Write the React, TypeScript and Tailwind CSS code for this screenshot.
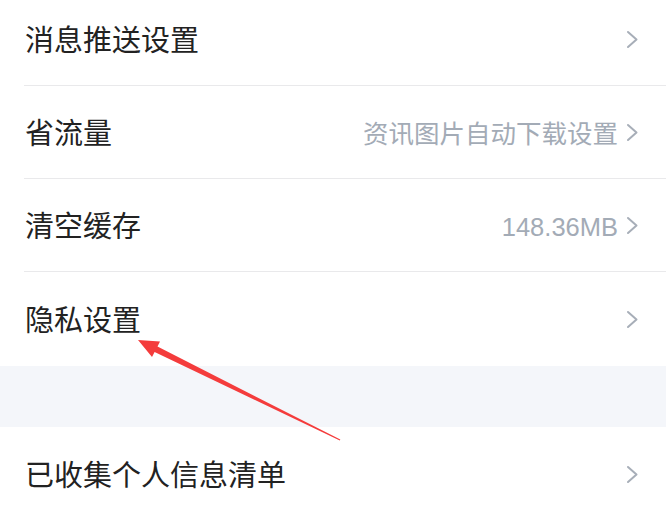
type Row = { label: string; value?: string }

const rows: Row[] = [
  { label: '消息推送设置' },
  { label: '省流量', value: '资讯图片自动下载设置' },
  { label: '清空缓存', value: '148.36MB' },
  { label: '隐私设置' },
]

function Chevron() {
  return (
    <svg width="13" height="19" viewBox="0 0 13 19" className="shrink-0">
      <polyline points="2,2 10.5,9.5 2,17" fill="none" stroke="#a7aeb8" strokeWidth="2" strokeLinecap="round" strokeLinejoin="round" />
    </svg>
  )
}

function SettingRow({ label, value, last }: Row & { last?: boolean }) {
  return (
    <div className="pl-6">
      <div
        className={`flex items-center pr-[27px] ${last ? 'h-[94px]' : 'h-[93px] border-b border-[#e9e9eb]'}`}
      >
        <span className="flex-1 pl-px pt-[5px] text-[29px] text-[#222222]">{label}</span>
        {value && <span className="mr-2 pt-[5px] text-[25.5px] text-[#a3abb6]">{value}</span>}
        <Chevron />
      </div>
    </div>
  )
}

export default function App() {
  return (
    <div
      className="relative h-[511px] w-full overflow-hidden bg-white"
      style={{ fontFamily: '"Liberation Sans", "Noto Sans CJK SC", sans-serif' }}
    >
      <div className="-mt-[7px]">
        {rows.map((r, i) => (
          <SettingRow key={r.label} {...r} last={i === rows.length - 1} />
        ))}
        <div className="h-[61px] bg-[#f4f6fa]" />
        <SettingRow label="已收集个人信息清单" last />
      </div>

      {/* red annotation arrow */}
      <svg className="pointer-events-none absolute left-0 top-0" width="666" height="511" viewBox="0 0 666 511">
        <polygon
          points="138,340 160,341.5 157.5,346.5 340.3,439.6 339.8,440.5 154.6,352 152,357"
          fill="#f43c3c"
        />
      </svg>
    </div>
  )
}
